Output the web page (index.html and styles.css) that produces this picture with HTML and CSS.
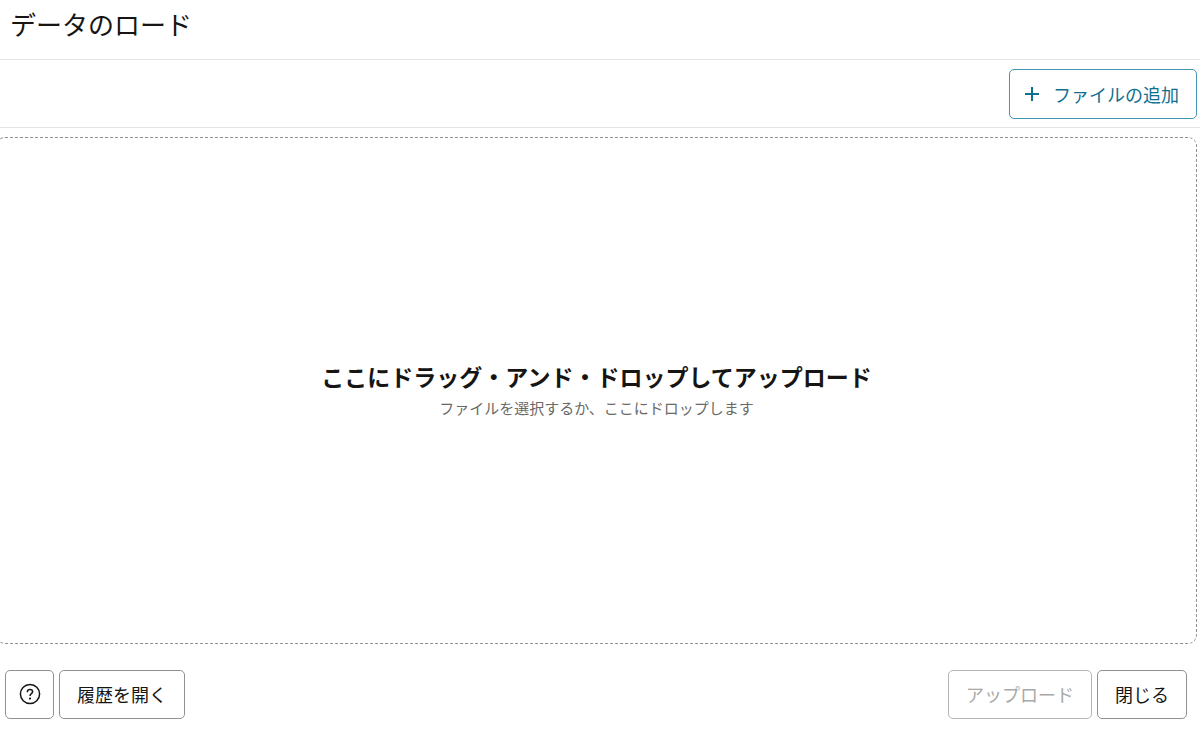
FILE: index.html
```html
<!DOCTYPE html>
<html lang="ja">
<head>
<meta charset="utf-8">
<meta name="viewport" content="width=device-width, initial-scale=1">
<title>データのロード</title>
<link rel="stylesheet" href="styles.css">
</head>
<body>
<div class="dialog">
  <header class="dialog-header">
    <h1 class="dialog-title">データのロード</h1>
  </header>
  <div class="toolbar">
    <button class="button button-accent" type="button">
      <svg class="icon-plus" viewBox="0 0 16 16" aria-hidden="true"><path d="M8 1v14M1 8h14"/></svg>
      <span>ファイルの追加</span>
    </button>
  </div>
  <main class="drop-zone">
    <h2 class="drop-title">ここにドラッグ・アンド・ドロップしてアップロード</h2>
    <p class="drop-hint">ファイルを選択するか、ここにドロップします</p>
  </main>
  <footer class="dialog-footer">
    <div class="button-group">
      <button class="button button-icon" type="button" aria-label="ヘルプ">
        <svg class="icon-help" viewBox="0 0 22 22" aria-hidden="true">
          <circle class="icon-ring" cx="11" cy="11" r="9.6"/>
          <path class="icon-hook" d="M8.4 9.3V8.8C8.4 7.4 9.5 6.6 11 6.6S13.6 7.5 13.6 8.8C13.6 10.6 11 10.7 11 12.9"/>
          <circle class="icon-dot" cx="11" cy="15.6" r="1.1"/>
        </svg>
      </button>
      <button class="button" type="button">履歴を開く</button>
    </div>
    <div class="button-group">
      <button class="button" type="button" disabled>アップロード</button>
      <button class="button" type="button">閉じる</button>
    </div>
  </footer>
</div>
</body>
</html>
```
FILE: styles.css
```css
* {
  box-sizing: border-box;
}

body {
  margin: 0;
  background: #fff;
  color: #161513;
  font-family: "Noto Sans CJK JP", sans-serif;
  overflow-x: hidden;
}

.dialog {
  display: flex;
  flex-direction: column;
  min-height: 100vh;
}

.dialog-header {
  padding: 2px 10px 13px;
  border-bottom: 1px solid #e4e4e4;
}

.dialog-title {
  margin: 0;
  font-size: 26px;
  font-weight: 400;
  line-height: 44px;
}

.toolbar {
  display: flex;
  justify-content: flex-end;
  padding: 9px 3px 8px;
  border-bottom: 1px solid #e4e4e4;
}

.button {
  display: inline-flex;
  align-items: center;
  justify-content: center;
  height: 49px;
  padding: 0 17px 1px;
  border: 1px solid #929190;
  border-radius: 5px;
  background: #fff;
  color: #161513;
  font-family: inherit;
  font-size: 18px;
  line-height: 26px;
  white-space: nowrap;
}

.button-accent {
  gap: 13px;
  height: 50px;
  padding: 0 17px 0 14px;
  border-color: #4596b2;
  color: #0f6f90;
}

.button-icon {
  width: 49px;
  padding: 0 0 1px;
}

.button:disabled {
  border-color: #b5b5b4;
  color: #a9a9a8;
}

.icon-plus {
  width: 16px;
  height: 16px;
  fill: none;
  stroke: currentColor;
  stroke-width: 2;
}

.icon-help {
  width: 22px;
  height: 22px;
}

.icon-ring,
.icon-hook {
  fill: none;
  stroke: currentColor;
  stroke-width: 1.5;
}

.icon-dot {
  fill: currentColor;
}

.drop-zone {
  display: flex;
  flex: 1;
  flex-direction: column;
  align-items: center;
  justify-content: center;
  margin: 9px 3px 0 -4px;
  padding-bottom: 3px;
  border: 1px dashed #929190;
  border-radius: 9px;
  text-align: center;
}

.drop-title {
  margin: 0;
  font-size: 23px;
  font-weight: 700;
  line-height: 34px;
}

.drop-hint {
  margin: 3px 0 0;
  color: #6b6966;
  font-size: 15px;
  line-height: 24px;
}

.dialog-footer {
  display: flex;
  justify-content: space-between;
  padding: 26px 13px 12px 5px;
}

.button-group {
  display: flex;
  gap: 5px;
}
```
